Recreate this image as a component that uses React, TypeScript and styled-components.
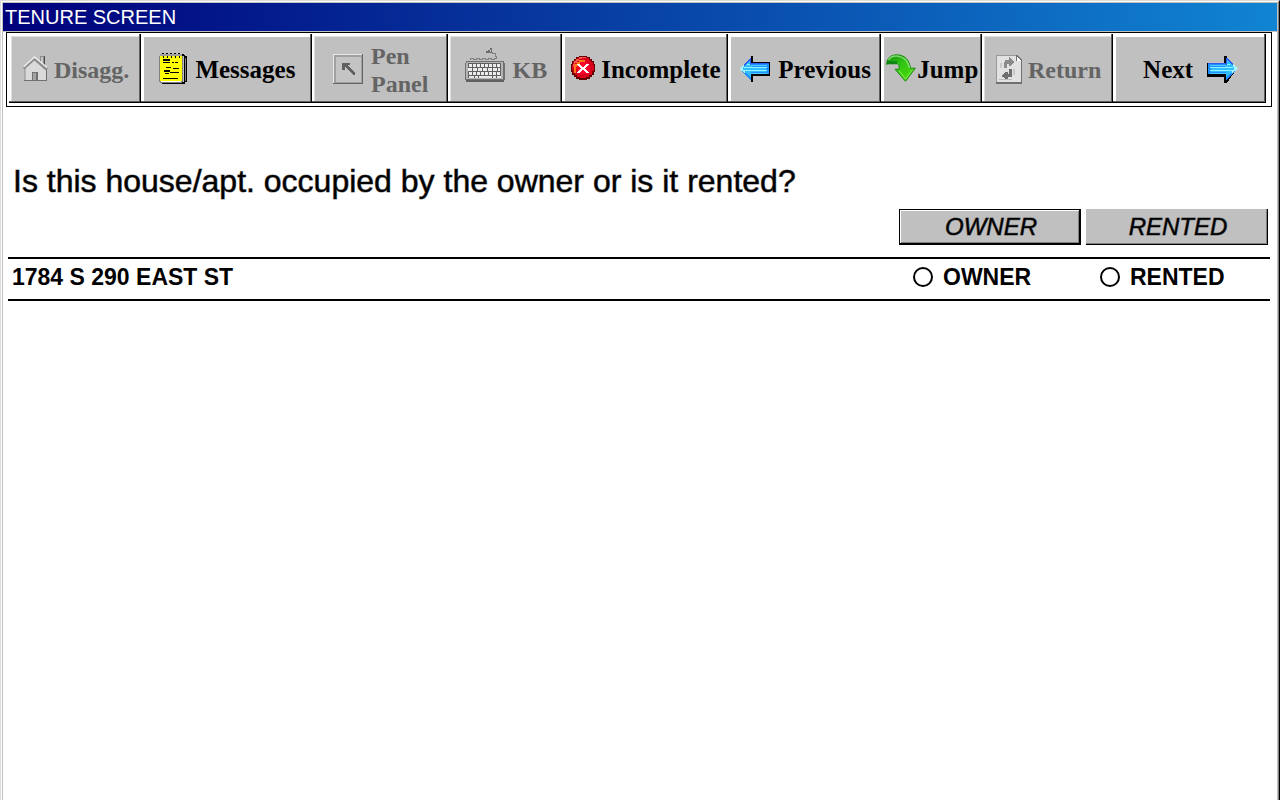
import React from "react";
import styled, { createGlobalStyle, css } from "styled-components";

const GlobalStyle = createGlobalStyle`
  *, *::before, *::after { box-sizing: border-box; }
  body {
    margin: 0;
    background: #fff;
    color: #000;
    font-family: "Liberation Sans", Arial, sans-serif;
  }
`;

const mediumWeight = css`
  -webkit-text-stroke: 1px rgba(0, 0, 0, 0.5);
`;

const Window = styled.div`
  min-height: 100vh;
  display: flex;
  border: 1px solid #dcdcdc;
  border-right-color: #000;
  border-bottom: 0;
`;

const WindowBevel = styled.div`
  flex: 1;
  display: flex;
  border: 1px solid #fff;
  border-right-color: #808080;
  border-bottom: 0;
`;

const Client = styled.div`
  flex: 1;
  min-width: 0;
  border: 1px solid #c0c0c0;
  border-bottom: 0;
`;

const TitleBar = styled.header`
  height: 29px;
  padding-left: 2px;
  border-bottom: 1px solid #c0c0c0;
  background: linear-gradient(90deg, #00007b, #1084d2);
`;

const Title = styled.h1`
  margin: 0;
  color: #fff;
  font-size: 20px;
  font-weight: 400;
  line-height: 28px;
`;

const Toolbar = styled.nav`
  display: flex;
  margin: 0 5px 0 3px;
  padding: 1px 5px 3px 2px;
  border: 1px solid #000;
`;

const ToolButton = styled.button<{ $share: number; $gap: number }>`
  flex: ${(p) => p.$share} 1 0;
  min-width: 0;
  height: 69px;
  display: flex;
  align-items: center;
  justify-content: center;
  gap: ${(p) => p.$gap}px;
  padding: 2px 0 0 2px;
  border: 0;
  background: #c0c0c0;
  box-shadow: inset -1px -1px #000, inset -2px -2px #606060, inset 3px 3px #fff;
  color: #000;
  font-family: "Liberation Serif", "Times New Roman", serif;
  font-size: 25px;
  font-weight: 700;
  line-height: 28px;
  text-align: left;

  svg { flex: none; display: block; }

  ${(p) =>
    p.disabled &&
    css`
      color: #646464;
      font-size: 24px;
      box-shadow: inset -1px -1px #000, inset -2px -2px #606060,
        inset 2px 2px #fff, inset 3px 3px #dfdfdf;
    `}
`;

const Main = styled.main`
  padding: 56px 7px 0 5px;
`;

const Question = styled.h2`
  margin: 0;
  padding-left: 5px;
  font-size: 32px;
  font-weight: 400;
  line-height: 36px;
  ${mediumWeight}
`;

const AnswerGrid = styled.div`
  display: grid;
  grid-template-columns: 1fr 182px 182px;
  column-gap: 5px;
  padding-right: 2px;
`;

const ColumnHeads = styled(AnswerGrid)`
  padding-top: 10px;
  padding-bottom: 12px;
`;

const HeadButton = styled.button<{ $default?: boolean }>`
  height: 36px;
  padding: 0 0 0 2px;
  border: 0;
  background: #c0c0c0;
  color: #000;
  font-family: inherit;
  font-size: 24px;
  font-style: italic;
  line-height: 28px;
  ${mediumWeight}
  box-shadow: ${(p) =>
    p.$default
      ? "inset 1px 1px #000, inset -2px -2px #000, inset 2px 2px #fff, inset -3px -3px #808080"
      : "inset -1px -1px #000, inset -2px -2px #808080"};
`;

const FirstHead = styled(HeadButton)`
  grid-column: 2;
`;

const UnitRow = styled(AnswerGrid)`
  align-items: center;
  height: 44px;
  border-top: 2px solid #000;
  border-bottom: 2px solid #000;
  padding-bottom: 4px;
  font-size: 23px;
  font-weight: 700;
  line-height: 28px;
`;

const Address = styled.span`
  padding-left: 4px;
`;

const Choice = styled.label`
  display: flex;
  align-items: center;
  gap: 10px;
  padding-left: 14px;
`;

const Radio = styled.input`
  appearance: none;
  width: 20px;
  height: 20px;
  margin: 0;
  border: 2px solid #000;
  border-radius: 50%;
  background: #fff;

  &:checked { background: radial-gradient(#000 0 4px, #fff 5px); }
`;

const HouseIcon = () => (
  <svg width="25" height="30" viewBox="0 0 25 30" aria-hidden="true">
    <path d="M17 1h5v11h-5z" fill="#8c8c8c" />
    <path d="M18 2h2v8h-2z" fill="#c8c8c8" />
    <path d="M21 1h1v10h-1z" fill="#505050" />
    <path d="M2 13 11 4l12 10v11H2z" fill="#dadada" />
    <path d="M2 13v12" stroke="#909090" fill="none" />
    <path d="M23.500 14v12M1 25.500h23" stroke="#707070" fill="none" />
    <path d="M.5 13.500 11.500 3.500l12.500 11" stroke="#8c8c8c" strokeWidth="3" fill="none" />
    <path d="M.5 12 11.500 2 24 12.500" stroke="#eee" strokeWidth="1.500" fill="none" />
    <path d="M9 17h6v8H9z" fill="#707070" />
    <path d="M10 18h3v7h-3z" fill="#a4a4a4" />
  </svg>
);

const NotepadIcon = () => (
  <svg width="28" height="34" viewBox="0 0 28 34" shapeRendering="crispEdges" aria-hidden="true">
    <path d="M3 2h23v1h2v26h-2v2H3z" fill="#000" />
    <path d="M24 3h1v26h-1z" fill="#c0c0c0" />
    <path d="M26 5h1v23h-1z" fill="#808080" />
    <path d="M0 3h1V2h22v1h1v26h-1v1H1v-1H0z" fill="#808080" />
    <path d="M2 28h20v1H2z" fill="#fff" />
    <path d="M1 3h22v25H1z" fill="#ff0" />
    <path d="M1 1h23v2H1z" fill="#a0a0a0" />
    <path
      d="M3 0h2v1H3zM7 0h2v1H7zM11 0h2v1h-2zM15 0h2v1h-2zM19 0h2v1h-2zM23 1h2v2h-2zM4 3h1v2H4zM8 3h1v2H8zM12 3h1v2h-1zM16 3h1v2h-1zM20 3h1v2h-1z"
      fill="#000"
    />
    <path
      d="M4 6h7v2H4zM4 9h7v1H4zM13 9h2v1h-2zM16 9h3v1h-3zM7 14h5v1H7zM14 15h6v1h-6zM5 17h6v2H5zM11 19h9v1h-9zM6 20h4v1H6zM4 25h15v1H4z"
      fill="#000"
    />
  </svg>
);

const PenIcon = () => (
  <svg width="30" height="32" viewBox="0 0 30 32" shapeRendering="crispEdges" aria-hidden="true">
    <path d="M0 0h30v30H0z" fill="#646464" />
    <path d="M0 0h29v29H0z" fill="#e8e8e8" />
    <path d="M1 1h28v28H1z" fill="#a0a0a0" />
    <path d="M3 3h25v25H3z" fill="#c4c4c4" />
    <path d="M9 9h8v2h-2v1h1v1h1v1h1v1h1v1h1v1h1v1h1v3h-2v-1h-1v-1h-1v-1h-1v-1h-1v-1h-1v-1h-1v-1h-1v-1h-1v3H9z" fill="#606060" />
  </svg>
);

const keyRows = [17, 21, 25];

const KeyboardIcon = () => (
  <svg width="40" height="46" viewBox="0 0 40 46" shapeRendering="crispEdges" aria-hidden="true">
    <path
      d="M5.500 13v-2h3v1h3v-1h3v1h3v-1h3v1h3v-1h3v1h3v-1h2v-2h-1V6h-3V5h-3"
      stroke="#808080"
      fill="none"
    />
    <path d="M21 4h2V3h2V1h2v5h-6z" fill="#6c6c6c" />
    <path d="M25 3h1v2h-1z" fill="#c8c8c8" />
    <path d="M1 14h38v2h1v17h-1v2H1v-2H0V16h1z" fill="#707070" />
    <path d="M2 15h36v17H1V16h1z" fill="#b4b4b4" />
    <path d="M3 16h33v15H3z" fill="#606060" />
    {keyRows.map((y, i) => (
      <path
        key={y}
        d={`M${4 - (i % 2)} ${y + 1.5}h32`}
        stroke="#ececec"
        strokeWidth="3"
        strokeDasharray={i % 2 ? "4 1" : "3 1"}
      />
    ))}
    <path d="M4 29h5v2H4zM10 29h3v2h-3zM14 29h13v2H14zM28 29h3v2h-3zM32 29h4v2h-4z" fill="#e8e8e8" />
    <path d="M1 33h38v2H1z" fill="#606060" />
  </svg>
);

const ErrorIcon = () => (
  <svg width="24" height="28" viewBox="0 0 24 28" shapeRendering="crispEdges" aria-hidden="true">
    <path d="M8 0h8v1h3v2h2v2h2v3h1v8h-1v3h-2v2h-2v2h-3v1H8v-1H5v-2H3v-2H1v-3H0V8h1V5h2V3h2V1h3z" fill="#600" />
    <path d="M8 1h8v1h2v2h2v2h2v3h1v6h-2v4h-3v2h-3v1H9v-1H6v-2H4v-2H2v-3H1V9h1V6h2V4h2V2h2z" fill="#d8001c" />
    <path d="M8 1h7v1h-4v1H8v2H6v2H4v4H2V8h1V5h2V3h3z" fill="#ff5a48" />
    <path d="M8 4h6v2H9v2H7v3H5v6H3v-6h1V8h2V6h2z" fill="#ff7a14" />
    <path d="M9 6h7v1h2v2h1v7h-2v2H9v-1H7v-2H6v-5h1V8h2z" fill="#f8062c" />
    <path d="M6 8h3v1h1v1h1v1h2v-1h1V9h1V8h3v1h-1v1h-1v1h-1v1h-1v1h1v1h1v1h1v1h1v1h-3v-1h-1v-1h-1v-1h-2v1h-1v1H9v1H6v-1h1v-1h1v-1h1v-1h1v-1H9v-1H8v-1H7V9H6z" fill="#fff" />
  </svg>
);

const ArrowIcon = ({ right = false }: { right?: boolean }) => (
  <svg width="31" height="27" viewBox="0 0 31 27" shapeRendering="crispEdges" aria-hidden="true">
    <g transform={right ? "matrix(-1 0 0 1 31 0)" : undefined}>
      <path
        d={right
          ? "M2 14 11 2V0h3v7h17v14H14v6h-3z"
          : "M1 14 12 1V0h2v6h17v14H14v6h-2v-2z"}
        fill="#000"
      />
      <path d="M0 13 11 2h1v5h18v11H12v6z" fill="#1e90ff" />
      <path d="M0 13 11 2h1v5h18v1H12v2z" fill="#2a5cf0" />
      <path d="M2 13 11 4v5h2v2h14v5H12v5z" fill="#32bdfc" />
      <path d="M5 11h23v1H5zM4 14h24v1H4zM8 8h3v1H8z" fill="#8cf4ff" />
      <path d="M12 9h16v1H12zM12 17h16v1H12z" fill="#52c8ff" />
      <path d="M0 13 5 8v3H4v3h2v3z" fill="#a8f4ff" />
    </g>
  </svg>
);

const JumpIcon = () => (
  <svg width="30" height="32" viewBox="0 0 30 32" aria-hidden="true">
    <defs>
      <linearGradient id="jump-green" x1="0" y1="0" x2="0.600" y2="1">
        <stop offset="0" stopColor="#128c10" />
        <stop offset="0.450" stopColor="#2fc414" />
        <stop offset="1" stopColor="#48d80c" />
      </linearGradient>
    </defs>
    <path
      d="M.7 10.500C.7 4 5 .8 10.500.8c8 0 13 5 14 13.400h4.800L19.500 27.300 9 15.200h4.200c0-4-.5-5.400-2.200-5.400H.7z"
      fill="url(#jump-green)"
      stroke="#1c8a12"
    />
    <path d="M2.500 6C4.500 2.500 8 1.800 11 2c7 .6 11 5 12.500 12" stroke="#7edb6c" strokeWidth="1.500" fill="none" />
    <path d="M1 7h10v3H1z" fill="#0c7a14" opacity=".7" />
    <path d="m13 16.500 6.500 8.500 7-9.500" stroke="#86ec58" fill="none" />
  </svg>
);

const ReturnIcon = () => (
  <svg width="26" height="29" viewBox="0 0 26 29" shapeRendering="crispEdges" aria-hidden="true">
    <path d="M0 0h21l5 5v24H0z" fill="#707070" />
    <path d="M1 1h19v5h5v21H1z" fill="#e2e2e2" />
    <path d="M0 0h20v1H0zM0 0h1v27H0z" fill="#999" />
    <path d="M21 2v4h4z" fill="#fff" />
    <path d="M8 13V7h1V5h4V2h1v1h1v1h1v1h1v1h1v2h-1v1h-1v1h-1v1h-2V9h-2v4z" fill="#8a8a8a" />
    <path d="M16 14v8h-4v3h-2v-1H9v-1H8v-1H6v-2h1v-1h1v-1h1v-1h3v2h1v-5z" fill="#6e6e6e" />
    <path d="M4 8h2v5H4zM17 14h2v6h-2z" fill="#c8c8c8" />
    <path d="M3 24h13v1H3z" fill="#bbb" />
  </svg>
);

type Tool = {
  label: React.ReactNode;
  icon: React.ReactNode;
  share: number;
  gap: number;
  disabled?: boolean;
  iconLast?: boolean;
};

const tools: Tool[] = [
  { label: "Disagg.", icon: <HouseIcon />, share: 132, gap: 6, disabled: true },
  { label: "Messages", icon: <NotepadIcon />, share: 171, gap: 8 },
  { label: <>Pen<br />Panel</>, icon: <PenIcon />, share: 136, gap: 8, disabled: true },
  { label: "KB", icon: <KeyboardIcon />, share: 114, gap: 8, disabled: true },
  { label: "Incomplete", icon: <ErrorIcon />, share: 166, gap: 6 },
  { label: "Previous", icon: <ArrowIcon />, share: 153, gap: 8 },
  { label: "Jump", icon: <JumpIcon />, share: 101, gap: 1 },
  { label: "Return", icon: <ReturnIcon />, share: 131, gap: 6, disabled: true },
  { label: "Next", icon: <ArrowIcon right />, share: 153, gap: 14, iconLast: true },
];

export default function App() {
  return (
    <>
      <GlobalStyle />
      <Window>
        <WindowBevel>
          <Client>
            <TitleBar>
              <Title>TENURE SCREEN</Title>
            </TitleBar>
            <Toolbar>
              {tools.map((t, i) => (
                <ToolButton key={i} type="button" $share={t.share} $gap={t.gap} disabled={t.disabled}>
                  {!t.iconLast && t.icon}
                  <span>{t.label}</span>
                  {t.iconLast && t.icon}
                </ToolButton>
              ))}
            </Toolbar>
            <Main>
              <Question id="question">Is this house/apt. occupied by the owner or is it rented?</Question>
              <ColumnHeads>
                <FirstHead type="button" $default>OWNER</FirstHead>
                <HeadButton type="button">RENTED</HeadButton>
              </ColumnHeads>
              <UnitRow role="radiogroup" aria-labelledby="question">
                <Address>1784 S 290 EAST ST</Address>
                <Choice>
                  <Radio type="radio" name="tenure" value="owner" />
                  OWNER
                </Choice>
                <Choice>
                  <Radio type="radio" name="tenure" value="rented" />
                  RENTED
                </Choice>
              </UnitRow>
            </Main>
          </Client>
        </WindowBevel>
      </Window>
    </>
  );
}
